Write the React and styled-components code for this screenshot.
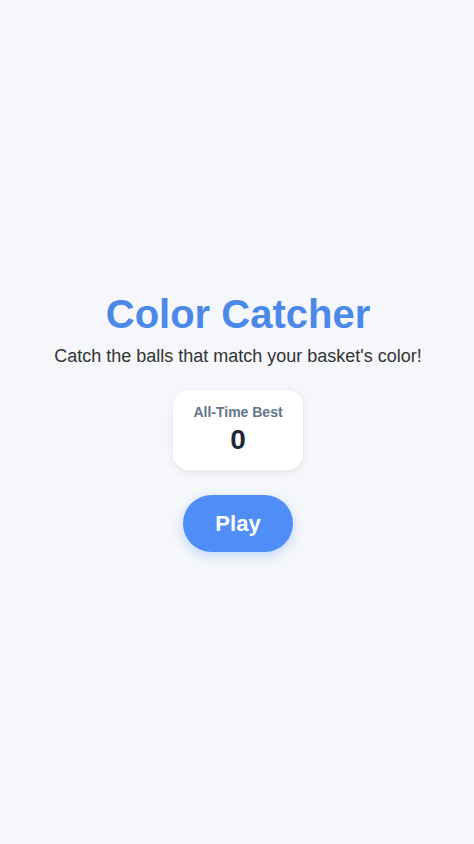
import styled, { createGlobalStyle } from "styled-components";

const GlobalStyle = createGlobalStyle`
  html, body {
    margin: 0;
    padding: 0;
    background-color: #f5f7fa;
    font-family: "Liberation Sans", Arial, sans-serif;
  }
`;

const Screen = styled.div`
  min-height: 844px;
  display: flex;
  flex-direction: column;
  align-items: center;
  justify-content: center;
  box-sizing: border-box;
  padding: 0 20px 0 22px;
`;

const Title = styled.h1`
  margin: 0;
  font-size: 40px;
  line-height: 44px;
  font-weight: 700;
  color: #4a89e8;
`;

const Subtitle = styled.p`
  margin: 10px 0 0;
  font-size: 18px;
  line-height: 21px;
  color: #333333;
`;

const ScoreCard = styled.div`
  margin-top: 23px;
  display: flex;
  flex-direction: column;
  align-items: center;
  padding: 14px 20px;
  background-color: #ffffff;
  border-radius: 16px;
  box-shadow: 0 2px 8px rgba(0, 0, 0, 0.08);
`;

const ScoreLabel = styled.div`
  font-size: 14px;
  line-height: 17px;
  font-weight: 700;
  color: #64748b;
`;

const ScoreValue = styled.div`
  margin-top: 3px;
  font-size: 28px;
  line-height: 32px;
  font-weight: 700;
  color: #1f2937;
`;

const PlayButton = styled.button`
  margin-top: 25px;
  padding: 16px 32px;
  border: none;
  border-radius: 999px;
  background-color: #4f8ef7;
  color: #ffffff;
  font-family: inherit;
  font-size: 22px;
  line-height: 25px;
  font-weight: 700;
  box-shadow: 0 4px 12px rgba(79, 142, 247, 0.3);
  cursor: pointer;
`;

const App = () => {
  return (
    <>
      <GlobalStyle />
      <Screen>
        <Title>Color Catcher</Title>
        <Subtitle>Catch the balls that match your basket's color!</Subtitle>
        <ScoreCard>
          <ScoreLabel>All-Time Best</ScoreLabel>
          <ScoreValue>0</ScoreValue>
        </ScoreCard>
        <PlayButton>Play</PlayButton>
      </Screen>
    </>
  );
};

export default App;
